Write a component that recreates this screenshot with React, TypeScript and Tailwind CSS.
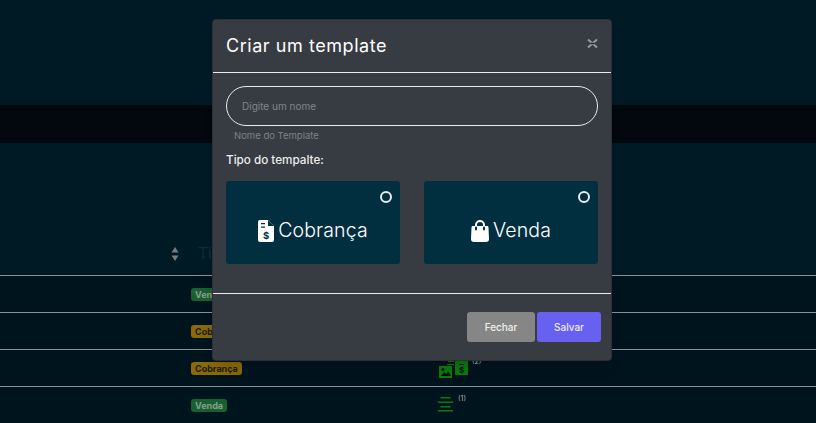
const rows = [
  { label: "Venda", tone: "bg-[#17602f] text-[#8f9a92]", count: "", icon: "none" },
  { label: "Cobrança", tone: "bg-[#8a6a06] text-[#1b1a0c]", count: "", icon: "none" },
  { label: "Cobrança", tone: "bg-[#8a6a06] text-[#1b1a0c]", count: "(2)", icon: "bill" },
  { label: "Venda", tone: "bg-[#17602f] text-[#8f9a92]", count: "(1)", icon: "lines" },
];

function BillIcon() {
  return (
    <svg width="30" height="20" viewBox="0 0 30 20" fill="#0b7a0b">
      <path d="M1 7h13v12H1z" />
      <path d="M3 17l3-4 2 2 2-3 3 5z" fill="#02121a" />
      <circle cx="5" cy="10.500" r="1.500" fill="#02121a" />
      <path d="M10 2h6v1h-6zM9 5h7v1H9z" />
      <path d="M17 1h13v15H17z" />
      <path d="M21 5h5v1h-5z" fill="#02121a" />
      <text x="23.500" y="13.500" fontSize="8" fontWeight="700" textAnchor="middle" fill="#02121a">$</text>
    </svg>
  );
}

function LinesIcon() {
  return (
    <svg width="16" height="16" viewBox="0 0 16 16" fill="#0b7a0b">
      <path d="M2.500 1h10v1.500h-10zM0 5.500h15V7H0zM2.500 10h10v1.500h-10zM0 14h15v1.500H0z" />
    </svg>
  );
}

function DocIcon() {
  return (
    <svg width="16" height="22" viewBox="0 0 16 22">
      <path d="M2 0h8l6 6v14a2 2 0 0 1-2 2H2a2 2 0 0 1-2-2V2a2 2 0 0 1 2-2z" fill="white" />
      <path d="M10 0v6h6z" fill="#022f40" />
      <path d="M3 3h4v1.300H3zM3 6.500h4v1.300H3z" fill="#022f40" />
      <text x="8" y="18.500" fontSize="9.500" fontWeight="700" textAnchor="middle" fill="#022f40">$</text>
    </svg>
  );
}

function BagIcon() {
  return (
    <svg width="18" height="22" viewBox="0 0 18 22">
      <path d="M2 6h14a1.500 1.500 0 0 1 1.500 1.400L18 19a3 3 0 0 1-3 3H3a3 3 0 0 1-3-3l.5-11.600A1.500 1.500 0 0 1 2 6z" fill="white" />
      <path d="M5 9V5a4 4 0 0 1 8 0v4" fill="none" stroke="white" strokeWidth="2" strokeLinecap="round" />
      <path d="M5 7.500v2M13 7.500v2" stroke="#022f40" strokeWidth="2" strokeLinecap="round" />
    </svg>
  );
}

function SortIcon() {
  return (
    <svg width="8" height="14" viewBox="0 0 8 14" fill="#767c7c">
      <path d="M4 0l3.500 5.500h-7zM4 14L.5 8.500h7z" />
    </svg>
  );
}

function CloseIcon() {
  return (
    <svg width="11" height="11" viewBox="0 0 11 11" fill="none">
      <path d="M1 1.500l9 8M10 1.500l-9 8" stroke="#9a9da0" strokeWidth="1.800" />
      <path d="M3.500 5.500h4" stroke="#23262b" strokeWidth="1.500" />
    </svg>
  );
}

function TypeCard({ children, label }: { children: React.ReactNode; label: string }) {
  return (
    <div className="relative flex h-[83px] w-[174px] items-center justify-center gap-[4px] rounded-[3px] bg-[#022f40] pt-[16px] text-white">
      <span className="absolute right-[8px] top-[10px] size-[12px] rounded-full border-2 border-[#e8eced]" />
      {children}
      <span className="text-[19.500px] font-light leading-none tracking-[0.15px]">{label}</span>
    </div>
  );
}

export default function App() {
  return (
    <div className="relative h-[423px] w-[816px] overflow-hidden bg-[#001a25] font-['Inter',sans-serif]">
      <div className="h-[105px]" />
      <div className="h-[38px] bg-[#02080e]" />
      <div className="flex h-[132px] items-end pb-[14px] pl-[171px]">
        <span className="mr-[19px] flex">
          <SortIcon />
        </span>
        <span className="text-[16px] leading-none text-[#03352c]">Tipo</span>
      </div>
      {rows.map((row, i) => (
        <div
          key={i}
          className="relative flex h-[37px] items-center border-t border-[#8a9093] bg-[#00141e] pl-[191px]"
        >
          <span className={`rounded-[3px] px-[4px] py-[1px] text-[9px] font-bold leading-[11px] ${row.tone}`}>
            {row.label}
          </span>
          <div className="absolute left-[438px] top-[7px] flex items-start gap-[4px]">
            {row.icon === "bill" && (
              <div className="mt-[2px]">
                <BillIcon />
              </div>
            )}
            {row.icon === "lines" && (
              <div className="mt-[2px]">
                <LinesIcon />
              </div>
            )}
            {row.count && <span className="text-[7px] text-[#aab2b5]">{row.count}</span>}
          </div>
        </div>
      ))}

      <div className="absolute left-[212px] top-[19px] h-[342px] w-[400px] rounded-[4px] border border-[#2c3036] bg-[#373b42] text-white shadow-lg">
        <div className="relative flex h-[53px] items-center border-b-[1.500px] border-[#e9ebec] pl-[13px]">
          <h1 className="text-[18px] font-normal leading-none tracking-[0.55px]">Criar um template</h1>
          <span className="absolute right-[13px] top-[18px] flex">
            <CloseIcon />
          </span>
        </div>
        <div className="px-[13px] pt-[13px]">
          <div className="flex h-[40px] w-[372px] items-center rounded-full border border-[#e9ebec] pl-[15px] text-[10px] text-[#82868a]">
            Digite um nome
          </div>
          <p className="mt-[3px] pl-[8px] text-[9.500px] leading-[14px] text-[#7e8286]">Nome do Template</p>
          <p className="mt-[10px] text-[11.700px] font-medium leading-[14px] text-[#eceded]">Tipo do tempalte:</p>
          <div className="mt-[14px] flex gap-[24px]">
            <TypeCard label="Cobrança">
              <DocIcon />
            </TypeCard>
            <TypeCard label="Venda">
              <BagIcon />
            </TypeCard>
          </div>
        </div>
        <div className="mt-[29px] border-t-[1.500px] border-[#e9ebec]" />
        <div className="flex justify-end gap-[2px] pr-[10px] pt-[18px]">
          <button className="h-[30px] w-[68px] rounded-[3px] bg-[#868686] text-[10px] font-medium text-[#eeeeee]">
            Fechar
          </button>
          <button className="h-[30px] w-[64px] rounded-[3px] bg-[#6760f0] text-[10px] font-medium text-[#eeeeee]">
            Salvar
          </button>
        </div>
      </div>
    </div>
  );
}
